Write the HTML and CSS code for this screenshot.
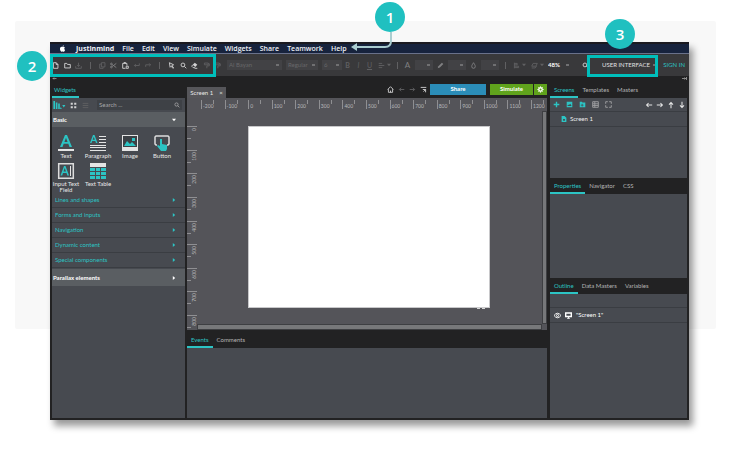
FILE: index.html
```html
<!DOCTYPE html>
<html lang="en">
<head>
<meta charset="utf-8">
<title>Justinmind</title>
<link rel="stylesheet" href="styles.css">
</head>
<body>
<svg class="defs" aria-hidden="true">
  <symbol id="search" viewBox="0 0 10 10"><circle cx="4.2" cy="4.2" r="2.7"/><path d="M6.2 6.2L9 9"/></symbol>
  <symbol id="undo" viewBox="0 0 10 10"><path d="M9 2v3H2M4 3L2 5l2 2"/></symbol>
  <symbol id="redo" viewBox="0 0 10 10"><path d="M1 7V4h7M6 2l2 2-2 2"/></symbol>
  <symbol id="left" viewBox="0 0 10 10"><path d="M9 5H2M4.500 2.500L2 5l2.500 2.500"/></symbol>
  <symbol id="right" viewBox="0 0 10 10"><path d="M1 5h7M5.500 2.500L8 5 5.500 7.500"/></symbol>
  <symbol id="up" viewBox="0 0 10 10"><path d="M5 9V2M2.500 4.500L5 2l2.500 2.500"/></symbol>
  <symbol id="down" viewBox="0 0 10 10"><path d="M5 1v7M2.500 5.500L5 8l2.500-2.500"/></symbol>
  <symbol id="caret" viewBox="0 0 10 10"><path class="solid" d="M0 2h10L5 8z"/></symbol>
  <symbol id="roller" viewBox="0 0 10 10"><path d="M2 1.500h5.500v2.500H2zM7.500 2.500H9v3H5.500V9"/></symbol>
</svg>
<div class="stage">
  <div class="backdrop"></div>
  <main class="app">
    <nav class="menubar" aria-label="Application menu">
      <svg class="apple" viewBox="0 0 10 10"><path d="M5 2.800C3.500 2 1.400 2.800 1.400 5.500 1.400 8 2.800 9.800 4 9.600c.8-.2 1.200-.2 2 0 1.300.3 2.400-1.400 2.700-2.600C7.200 6.200 7.200 4.200 8.500 3.500 7.500 2.200 6 2.300 5 2.800zM5 2.300C5 1.200 5.800.4 6.800.2 6.900 1.400 6 2.300 5 2.300z"/></svg>
      <a href="#" class="brand">Justinmind</a><a href="#">File</a><a href="#">Edit</a><a href="#">View</a><a href="#">Simulate</a><a href="#">Widgets</a><a href="#">Share</a><a href="#">Teamwork</a><a href="#">Help</a>
    </nav>

    <div class="toolbar">
      <div class="tools">
        <button aria-label="New"><svg viewBox="0 0 10 10"><path d="M2 1h4l2.500 2.500V9H2zM6 1v2.500h2.500"/></svg></button>
        <button aria-label="Open"><svg viewBox="0 0 10 10"><path d="M1 8.500V2h3l1 1.500h4v5z"/></svg></button>
        <button aria-label="Save" class="dim"><svg viewBox="0 0 10 10"><path d="M1 6v3h8V6M5 1v5M3 4.500L5 6.500l2-2"/></svg></button>
        <i class="sep"></i>
        <button aria-label="Copy" class="dim"><svg viewBox="0 0 10 10"><path d="M3.500 1h5v6h-5zM3 3H1v6h5V7.500"/></svg></button>
        <button aria-label="Cut" class="mid"><svg viewBox="0 0 10 10"><path d="M9 2L3 6.500M9 8L3 3.500"/><circle cx="2" cy="2.800" r="1.200"/><circle cx="2" cy="7.200" r="1.200"/></svg></button>
        <button aria-label="Paste"><svg viewBox="0 0 10 10"><path d="M5 9H1V2h6v3M2.800 2V.8h2.400V2M6 6h3v3H6z"/></svg></button>
        <button aria-label="Undo" class="dim"><svg><use href="#undo"/></svg></button>
        <button aria-label="Redo" class="dim"><svg><use href="#redo"/></svg></button>
        <i class="sep"></i>
        <button aria-label="Select"><svg viewBox="0 0 10 10"><path d="M2 1l6 3-2.500 1L8 8.500 7 9 4.500 6 3 7.500z"/></svg></button>
        <button aria-label="Zoom"><svg><use href="#search"/></svg></button>
        <button aria-label="Erase"><svg viewBox="0 0 10 10"><path class="solid" d="M5.500 1L9 4 6 7 2.500 4z"/><path d="M2.500 4L1 6l2 2h2l1-1M5 9h4"/></svg></button>
        <button aria-label="Copy style" class="dim"><svg><use href="#roller"/></svg></button>
      </div>
      <button aria-label="Paste style" class="dim"><svg><use href="#roller"/></svg></button>
      <select class="font" aria-label="Font"><option>Al Bayan</option></select>
      <select class="weight" aria-label="Weight"><option>Regular</option></select>
      <select class="size" aria-label="Size"><option>6</option></select>
      <div class="styles">
        <button class="dim"><b>B</b></button><button class="dim"><em>I</em></button><button class="dim"><u>U</u></button>
      </div>
      <button class="dim wide" aria-label="Align"><svg viewBox="0 0 10 10"><path d="M1 2h5M1 5h8M1 8h5"/></svg><svg class="tiny"><use href="#caret"/></svg></button>
      <i class="sep"></i>
      <button class="mid letter">A</button>
      <select class="swatch" aria-label="Text colour"><option></option></select>
      <button class="mid" aria-label="Line"><svg viewBox="0 0 10 10"><path class="solid" d="M1 9l1-3 5-5 2 2-5 5z"/></svg></button>
      <select class="swatch" aria-label="Line colour"><option></option></select>
      <button class="mid" aria-label="Fill"><svg viewBox="0 0 10 10"><path d="M5 1C3.500 3.500 2.500 4.500 2.500 6.500a2.500 2.500 0 005 0C7.500 4.500 6.500 3.500 5 1z"/></svg></button>
      <select class="swatch" aria-label="Fill colour"><option></option></select>
      <i class="sep"></i>
      <button class="dim wide" aria-label="Arrange"><svg viewBox="0 0 10 10"><path d="M2 1v8M2 2h4v2H2M2 6h6v2H2"/></svg><svg class="tiny"><use href="#caret"/></svg></button>
      <button class="dim wide" aria-label="Layers"><svg viewBox="0 0 10 10"><path d="M3 2h6L7 6H1zM1 8.500h5L8 6"/></svg><svg class="tiny"><use href="#caret"/></svg></button>
      <select class="zoom" aria-label="Zoom level"><option>48%</option></select>
      <button class="find" aria-label="Search"><svg><use href="#search"/></svg></button>
      <select class="mode" aria-label="Perspective"><option>USER INTERFACE</option></select>
      <a href="#" class="signin">SIGN IN</a>
    </div>

    <div class="workspace">
      <aside class="left">
        <div class="collapse"><button aria-label="Collapse left panel"><svg viewBox="0 0 10 10"><path d="M2 5h7M4 3L2 5l2 2"/></svg></button></div>
        <div class="tabs"><button class="active">Widgets</button></div>
        <div class="panel">
          <div class="filter">
            <button class="lib" aria-label="Libraries"><svg viewBox="0 0 14 10"><path class="solid" d="M0 0h2v10H0zM3 2h2v8H3zM6 3h2v7H6zM8.500 8h1l1 2h-2zM11 5h4l-2 3z"/></svg></button>
            <button aria-label="Grid"><svg viewBox="0 0 10 10"><path class="solid" d="M1 1h3v3H1zM6 1h3v3H6zM1 6h3v3H1zM6 6h3v3H6z"/></svg></button>
            <button class="dim" aria-label="List"><svg viewBox="0 0 10 10"><path d="M1 2h8M1 5h8M1 8h8"/></svg></button>
            <label class="search"><input type="text" placeholder="Search ..." aria-label="Search widgets"><svg><use href="#search"/></svg></label>
          </div>
          <button class="head">Basic<svg class="tiny"><use href="#caret"/></svg></button>
          <div class="widgets">
            <button><svg viewBox="0 0 16 16"><path class="teal" d="M2 12L7 0h2l5 12h-2.500l-1.200-3.200H5.700L4.500 12zM6.400 7h3.200L8 2.700z"/><path class="light" d="M0 14h16v2H0z"/></svg>Text</button>
            <button><svg viewBox="0 0 16 16"><path class="teal" d="M0 8L3 0h1.500l3 8H6L5.300 6H2.200L1.500 8zM2.700 4.700h2.100l-1-3z"/><path class="light" d="M9 1h7v1H9zM9 4h7v1H9zM9 7h7v1H9zM0 10h16v1H0zM0 12h16v1H0zM0 15h16v1H0z"/></svg>Paragraph</button>
            <button><svg viewBox="0 0 16 16"><path class="light" d="M0 0h16v16H0z"/><path class="hole" d="M1 1h14v11H1z"/><path class="teal" d="M2 11l3-5 3 3 2-2 4 4zM10 3h3v3h-3z"/></svg>Image</button>
            <button><svg viewBox="0 0 16 16"><path class="outline" d="M3 10H2L1 9V2l1-1h12l1 1v7l-1 1h-1"/><path class="teal" d="M6 4h2v5l5 1v4l-1 2H7l-4-5 1-1 2 1z"/></svg>Button</button>
            <button><svg viewBox="0 0 16 16"><path class="outline" d="M.7.700h14.600v14.600H.7z"/><path class="teal" d="M2.500 12.500L6 3h1.500L11 12.500H9.300l-.8-2.500H5l-.8 2.500zM5.500 8.500H8L6.700 5z"/><path class="light" d="M12 3h1v10h-1z"/></svg>Input Text Field</button>
            <button><svg viewBox="0 0 16 16"><path class="light" d="M0 0h16v4H0z"/><path class="teal" d="M0 5h16v11H0z"/><path class="lines" d="M0 8.500h16M0 12.500h16M5.500 5v11M10.500 5v11"/></svg>Text Table</button>
          </div>
          <button class="row">Lines and shapes<svg class="tiny"><use href="#caret"/></svg></button>
          <button class="row">Forms and inputs<svg class="tiny"><use href="#caret"/></svg></button>
          <button class="row">Navigation<svg class="tiny"><use href="#caret"/></svg></button>
          <button class="row">Dynamic content<svg class="tiny"><use href="#caret"/></svg></button>
          <button class="row">Special components<svg class="tiny"><use href="#caret"/></svg></button>
          <button class="head closed">Parallax elements<svg class="tiny"><use href="#caret"/></svg></button>
        </div>
      </aside>

      <section class="center">
        <div class="docbar">
          <button class="doc">Screen 1 <span>×</span></button>
          <div class="history">
            <button aria-label="Home"><svg viewBox="0 0 10 10"><path d="M1 5l4-4 4 4M2 4.500V9h6V4.500M5 9V6.500"/></svg></button>
            <button class="dim" aria-label="Back"><svg><use href="#left"/></svg></button>
            <button class="dim" aria-label="Forward"><svg><use href="#right"/></svg></button>
            <button aria-label="Expand"><svg viewBox="0 0 10 10"><path d="M1 2h8M4 5h4v4M8 5L5 8"/></svg></button>
          </div>
          <button class="share">Share</button>
          <button class="simulate">Simulate</button>
          <button class="gear" aria-label="Simulation settings"><svg viewBox="0 0 10 10"><circle class="thick" cx="5" cy="5" r="2.500"/><path d="M5 .5V2M5 8v1.500M.5 5H2M8 5h1.500M2 2l1 1M7 7l1 1M8 2L7 3M3 7L2 8"/></svg></button>
        </div>
        <div class="canvas">
          <ol class="ruler-x"><li>-200</li><li>-100</li><li>0</li><li>100</li><li>200</li><li>300</li><li>400</li><li>500</li><li>600</li><li>700</li><li>800</li><li>900</li><li>1000</li><li>1100</li><li>1200</li></ol>
          <ol class="ruler-y"><li>0</li><li>100</li><li>200</li><li>300</li><li>400</li><li>500</li><li>600</li><li>700</li><li>800</li></ol>
          <div class="board"><div class="sheet"></div><i class="grip"></i></div>
          <i class="scroll-y"></i>
          <i class="scroll-x"></i>
        </div>
        <div class="tabs"><button class="active">Events</button><button>Comments</button></div>
        <div class="panel events"></div>
      </section>

      <aside class="side">
        <div class="collapse end"><button aria-label="Collapse right panel"><svg viewBox="0 0 10 10"><path d="M0 5h7M5 3l2 2-2 2M9 2v6"/></svg></button></div>
        <div class="tabs"><button class="active">Screens</button><button>Templates</button><button>Masters</button></div>
        <div class="panel screens">
          <div class="actions">
            <button aria-label="Add"><svg viewBox="0 0 10 10"><path class="thick" d="M5 1v8M1 5h8"/></svg></button>
            <button aria-label="Add image"><svg viewBox="0 0 10 10"><path class="solid" fill-rule="evenodd" d="M1 1h8v8H1zM2 7h6L6 4 4 6 3 5z"/></svg></button>
            <button aria-label="Add folder"><svg viewBox="0 0 10 10"><path class="solid" fill-rule="evenodd" d="M1 1h3l1 1h4v7H1zM4 4v1.500H2.500v1H4V8h1V6.500h1.500v-1H5V4z"/></svg></button>
            <button class="mid" aria-label="List"><svg viewBox="0 0 10 10"><path d="M1 1h8v8H1zM1 4h8M1 6.500h8M4 1v8"/></svg></button>
            <button class="mid" aria-label="Expand"><svg viewBox="0 0 10 10"><path d="M1 4V1h3M6 1h3v3M9 6v3H6M4 9H1V6"/></svg></button>
            <span class="grow"></span>
            <button class="pale" aria-label="Left"><svg><use href="#left"/></svg></button>
            <button class="pale" aria-label="Right"><svg><use href="#right"/></svg></button>
            <button class="pale" aria-label="Up"><svg><use href="#up"/></svg></button>
            <button class="pale" aria-label="Down"><svg><use href="#down"/></svg></button>
          </div>
          <div class="entry"><svg viewBox="0 0 10 10"><path class="teal" fill-rule="evenodd" d="M1 0h5l3 3v7H1zM3.500 5v3h3V5z"/></svg>Screen 1</div>
        </div>
        <div class="tabs low"><button class="active">Properties</button><button>Navigator</button><button>CSS</button></div>
        <div class="panel properties"></div>
        <div class="tabs low"><button class="active">Outline</button><button>Data Masters</button><button>Variables</button></div>
        <div class="panel outline-panel">
          <div class="spacer"></div>
          <div class="item">
            <svg viewBox="0 0 10 10"><path d="M0 5q5-6.500 10 0-5 6.500-10 0z"/><circle cx="5" cy="5" r="1.500"/></svg>
            <svg viewBox="0 0 10 10"><path class="thick" d="M1 1.500h8v5H1z"/><path d="M3 9h4M5 7v2"/></svg>
            "Screen 1"
          </div>
        </div>
      </aside>
    </div>

    <i class="frame tools-frame"></i>
    <i class="frame mode-frame"></i>
    <svg class="arrow" viewBox="0 0 46 24"><path class="line" d="M40 0v9q0 6-6 6H6"/><path class="tip" d="M0 15l6-4v8z"/></svg>
    <span class="callout one">1</span>
    <span class="callout two">2</span>
    <span class="callout three">3</span>
  </main>
</div>
</body>
</html>
```
FILE: styles.css
```css
:root {
  --teal: #2cc4c4;
  --ink: #222223;
  --panel: #474a50;
  --pale: #d2d2d3;
}
* { box-sizing: border-box; }
body { margin: 0; background: #fff; font: 6px/8px "Lato", "Open Sans", sans-serif; color: var(--pale); }
button, input, select { font: inherit; color: inherit; background: none; border: 0; padding: 0; margin: 0; border-radius: 0; }
button { display: flex; align-items: center; justify-content: center; }
a { color: inherit; text-decoration: none; }
ol { list-style: none; margin: 0; padding: 0; }
svg { width: 7px; height: 7px; flex: none; fill: none; stroke: currentColor; stroke-width: 1.3; overflow: visible; }
.defs { position: absolute; width: 0; height: 0; }
.solid { fill: currentColor; stroke: none; }
.thick { stroke-width: 2; }
.teal { fill: var(--teal); stroke: none; }
.light { fill: #e4e4e4; stroke: none; }
.hole { fill: #3c4045; stroke: none; }
.outline { stroke: #dcdcdc; stroke-width: 1.5; }
.lines { stroke: var(--panel); stroke-width: 1; }
svg.tiny { width: 4px; height: 4px; }

.stage { position: relative; padding: 42px 56px 39px 50px; }
.backdrop { position: absolute; inset: 21px 29px auto 15px; height: 308px; background: #f8f8f8; border-radius: 2px; }
.app { position: relative; background: #1d1d1e; box-shadow: 4px 6px 7px rgba(0, 0, 0, .4); }

.menubar { display: flex; align-items: center; gap: 8px; height: 12px; padding-left: 9px; background: #17233d; border-top: 2px solid #1b1a20; border-bottom: 1px solid #69718a; color: #f0f2f6; font: 600 7px/9px "Open Sans", sans-serif; }
.menubar .brand { font-weight: 700; }
.apple { fill: #fff; stroke: none; margin-right: 2px; }

.toolbar { display: flex; align-items: center; height: 22px; background: #39393b; }
.toolbar button { width: 11px; height: 12px; }
.tools { display: grid; grid-template-columns: repeat(14, 1fr); width: 162px; justify-items: center; }
.sep { width: 1px; height: 7px; margin: 0 4px; align-self: center; background: #606062; }
.dim { color: #606062; }
.mid { color: #808082; }
.toolbar .wide { width: 18px; gap: 2px; }
.toolbar .letter { font-size: 8px; }
.styles { display: flex; font-size: 7px; }
select { appearance: none; height: 10px; padding: 0 2px; color: #68686a; background: #424245 linear-gradient(#707072, #707072) no-repeat right 3px center / 3px 2px; }
.font { width: 55px; margin-left: 4px; }
.weight { width: 32px; margin-left: 4px; }
.size { width: 20px; margin-left: 4px; }
.swatch { width: 18px; margin: 0 2px; }
.zoom { width: 26px; color: #fff; font-weight: 700; background-color: transparent; }
.toolbar .find { margin-left: auto; }
.mode { width: 64px; margin-left: 4px; padding-left: 7px; color: #e0e0e1; background-color: transparent; }
.signin { width: 30px; text-align: right; padding-right: 4px; color: var(--teal); white-space: nowrap; }

.workspace { display: grid; grid-template-columns: 133px minmax(0, 1fr) 138px; gap: 2px; padding: 0 2px 2px; min-height: 344px; background: var(--ink); }
.left, .center, .side { display: flex; flex-direction: column; min-width: 0; }
.collapse { display: flex; height: 4px; color: #c0c0c0; }
.collapse.end { justify-content: flex-end; }
.collapse svg { width: 5px; height: 5px; }
.tabs { display: flex; align-items: flex-end; height: 18px; flex: none; background: var(--ink); }
.tabs button { height: 14px; padding: 0 4px; border-bottom: 2px solid transparent; color: #b4b4b5; }
.tabs .active { color: var(--teal); border-color: var(--teal); }
.panel { background: var(--panel); }

.left .panel { flex: 1; }
.left .tabs .active { padding: 0 3px 0 2px; }
.filter { display: flex; align-items: center; gap: 3px; height: 14px; padding: 0 3px 0 1px; }
.lib { color: var(--teal); }
.lib svg { width: 12px; height: 8px; }
.filter button + button { margin-left: 2px; }
.search { display: flex; align-items: center; flex: 1; min-width: 0; height: 10px; margin-left: 5px; padding: 0 2px; background: #3e4146; }
.search input { flex: 1; min-width: 0; width: 100%; }
.search input::placeholder { color: #a8a8a9; opacity: 1; }
.search svg { width: 6px; height: 6px; color: #a8a8a9; }
.head, .row { width: 100%; height: 15px; justify-content: space-between; padding: 0 9px 0 1px; }
.head { color: #fff; font-weight: 700; background: #5a5e62; }
.head.closed { height: 17px; margin-top: 1px; }
.row { padding-left: 3px; color: var(--teal); border-bottom: 1px solid #3a3d42; }
.row .tiny, .closed .tiny { transform: rotate(-90deg); }
.widgets { display: grid; grid-template-columns: repeat(4, 28px); column-gap: 4px; row-gap: 4px; height: 66px; padding-top: 8px; align-content: start; justify-content: start; }
.widgets button { flex-direction: column; justify-content: flex-start; gap: 2px; line-height: 6px; color: #e8e8e8; }
.widgets svg { width: 16px; height: 16px; }

.docbar { display: flex; align-items: center; height: 22px; padding-top: 4px; }
.doc { align-self: flex-end; width: 39px; height: 11px; gap: 6px; color: #e8e8e8; background: #56565a; white-space: nowrap; }
.history { display: flex; gap: 4px; margin: 0 3px 0 auto; }
.share, .simulate, .gear { height: 11px; color: #fff; font-weight: 700; }
.share { width: 56px; margin-right: 4px; background: #2b8db8; }
.simulate { width: 43px; margin-right: 1px; background: #60a31c; }
.gear { width: 13px; background: #60a31c; }

.canvas { display: grid; grid-template: 13px 1fr 6px / 10px minmax(0, 1fr) 5px; height: 232px; background: #545459; }
.ruler-x, .ruler-y { font-size: 5px; line-height: 5px; color: #b8b8ba; }
.ruler-x { grid-area: 1 / 1 / 2 / 4; display: grid; grid-template-columns: repeat(14, 1fr) 16px; padding: 2px 0 2px 14px; }
.ruler-x li { border-left: 1px solid #8f8f92; padding: 4px 0 0 1px; min-width: 0; background: linear-gradient(#8f8f92, #8f8f92) no-repeat 11px 0 / 1px 4px; }
.ruler-y { grid-area: 2 / 1 / 4 / 2; display: grid; grid-template-rows: repeat(8, 1fr) 15px; padding-top: 15px; }
.ruler-y li { border-top: 1px solid #8f8f92; writing-mode: sideways-lr; text-align: right; padding: 1px 0 0 5px; min-height: 0; background: linear-gradient(#8f8f92, #8f8f92) no-repeat 0 11px / 4px 1px; }
.board { grid-area: 2 / 2 / 3 / 3; padding: 15px 52px 0 51px; display: flex; flex-direction: column; }
.sheet { height: 182px; background: #fff; border: 1px solid #c8c8ca; }
.grip { align-self: flex-end; width: 8px; height: 2px; margin-right: 5px; border: dashed #d8d8d8; border-width: 1px 0 0; }
.scroll-y, .scroll-x { background: #77787a; border: 1px solid #3e3f42; }
.scroll-y { grid-area: 2 / 3 / 3 / 4; }
.scroll-x { grid-area: 3 / 2 / 4 / 3; }
.events { flex: 1; }

.side { padding-left: 1px; }
.actions { display: flex; align-items: center; gap: 6px; height: 14px; padding: 0 1px 0 3px; border-bottom: 1px solid #3a3d42; color: var(--teal); }
.actions .mid { color: #a0a0a2; }
.actions .pale { color: #e6e6e6; margin-left: -3px; }
.actions .pale + .pale { margin-left: -3px; }
.actions .pale svg { width: 8px; height: 8px; }
.actions .pale { padding-left: 0; }
.grow { flex: 1; }
.screens { height: 80px; }
.entry { display: flex; align-items: center; gap: 3px; height: 15px; padding-left: 11px; color: #f0f0f0; border-bottom: 1px solid #3a3d42; }
.entry svg { width: 6px; height: 6px; }
.tabs.low { height: 16px; }
.properties { height: 84px; }
.outline-panel { flex: 1; }
.spacer { height: 14px; border-bottom: 1px solid #3a3d42; }
.item { display: flex; align-items: center; gap: 4px; height: 15px; padding-left: 4px; color: #fff; border-bottom: 1px solid #3a3d42; }

.frame { position: absolute; border: 3px solid #00bfbc; }
.tools-frame { left: 0; top: 12px; width: 166px; height: 23px; }
.mode-frame { right: 31px; top: 13px; width: 71px; height: 22px; }
.callout { position: absolute; display: grid; place-items: center; width: 30px; height: 30px; border-radius: 50%; background: #20c0c0; color: #fff; font: 600 15px/20px "Open Sans", sans-serif; }
.one { left: 325px; top: -40px; }
.two { left: -33px; top: 9px; }
.three { right: 54px; top: -23px; }
.arrow { position: absolute; left: 301px; top: -10px; width: 46px; height: 24px; }
.arrow .line { stroke: #abcdd0; stroke-width: 2; }
.arrow .tip { fill: #abcdd0; stroke: none; }
```
